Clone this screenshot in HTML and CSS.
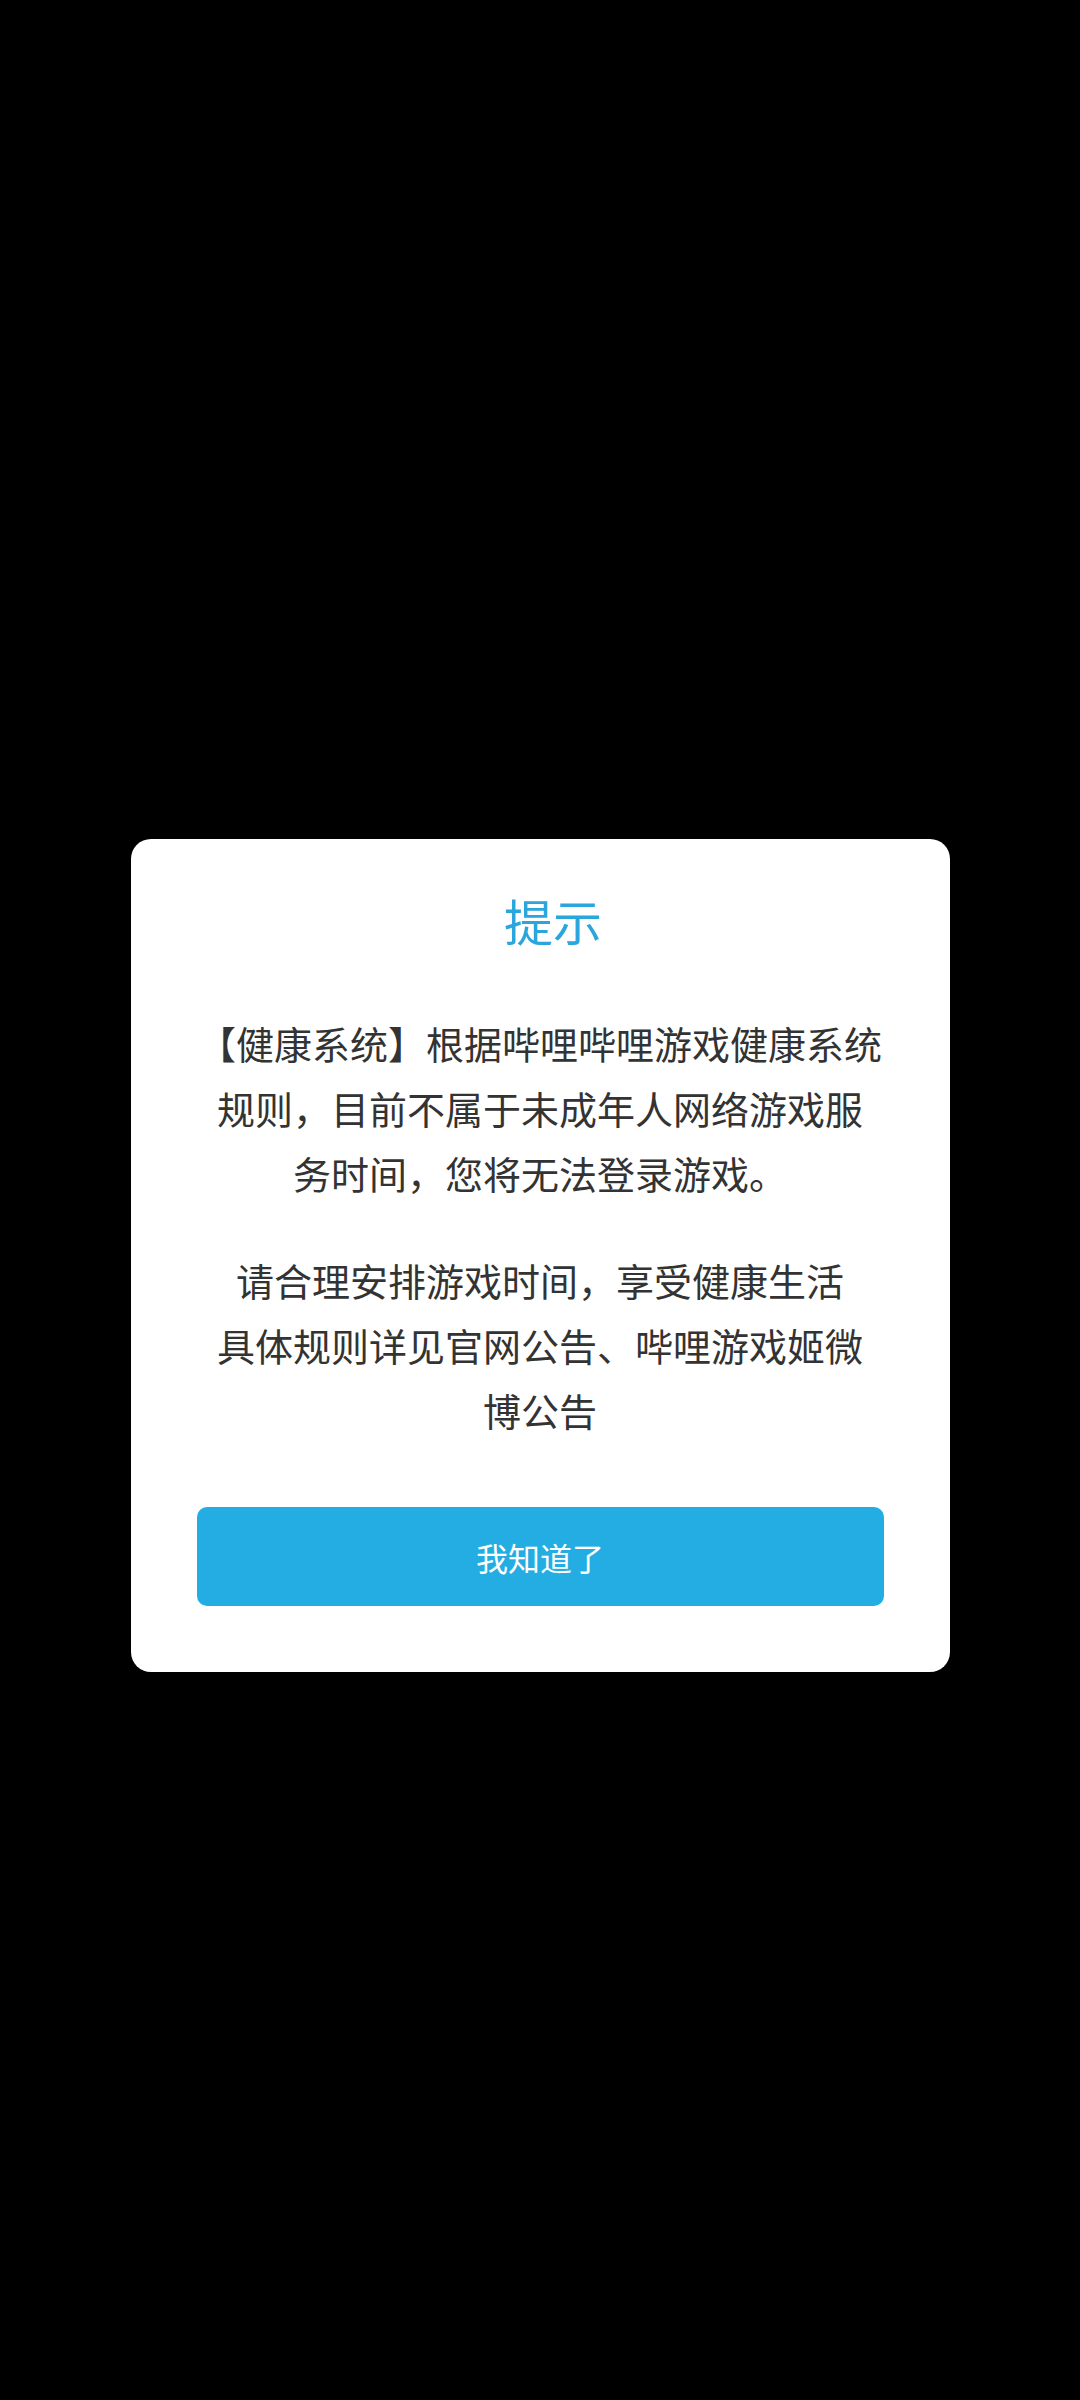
FILE: index.html
```html
<!DOCTYPE html>
<html>
<head>
  <meta charset="utf-8">
  <title>提示</title>
  <link rel="stylesheet" href="styles.css">
</head>
<body>
  <div class="screen">
    <div class="dialog">
      <h2 class="dialog-title">提示</h2>
      <p class="dialog-text">【健康系统】根据哔哩哔哩游戏健康系统<br>规则，目前不属于未成年人网络游戏服<br>务时间，您将无法登录游戏。</p>
      <p class="dialog-text second">请合理安排游戏时间，享受健康生活<br>具体规则详见官网公告、哔哩游戏姬微<br>博公告</p>
      <button class="dialog-btn">我知道了</button>
    </div>
  </div>
</body>
</html>
```

FILE: styles.css
```css
html, body {
  margin: 0;
  background-color: #000000;
}

body {
  font-family: "Noto Sans CJK SC", "Noto Sans", sans-serif;
  width: 1080px;
  height: 2400px;
}

.screen {
  padding-top: 839px;
}

.dialog {
  width: 819px;
  margin: 0 auto;
  background-color: #ffffff;
  border-radius: 20px;
  padding: 48px 66px 66px;
  box-sizing: border-box;
  text-align: center;
}

/* title sits a little right of centre in the original */
.dialog-title {
  margin: 0;
  padding-left: 26px;
  font-size: 49px;
  line-height: 66px;
  font-weight: 400;
  color: #2ba6dc;
}

.dialog-text {
  margin: 57px 0 0;
  font-size: 38px;
  line-height: 65px;
  color: #333333;
  white-space: nowrap;
}

.dialog-text.second {
  margin-top: 42px;
}

.dialog-btn {
  display: block;
  width: 100%;
  height: 99px;
  margin-top: 65px;
  padding: 0;
  border: none;
  border-radius: 10px;
  background-color: #24ade2;
  color: #ffffff;
  font-family: "Noto Sans CJK SC", "Noto Sans", sans-serif;
  font-size: 32px;
  cursor: pointer;
}
```
